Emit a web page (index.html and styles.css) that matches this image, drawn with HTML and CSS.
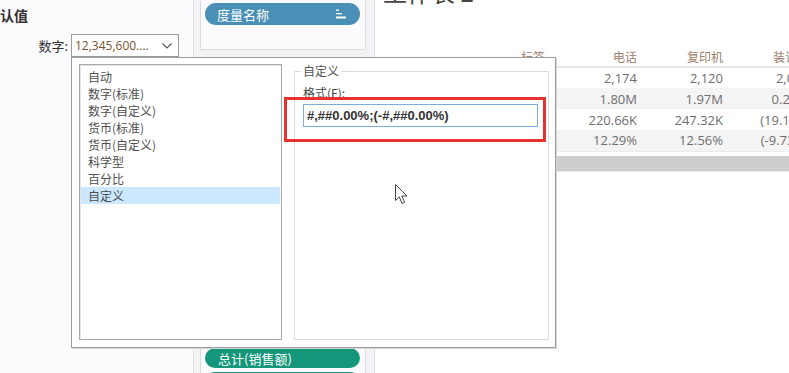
FILE: index.html
```html
<!DOCTYPE html>
<html lang="zh-CN">
<head>
  <meta charset="UTF-8" />
  <title>设置数字格式</title>
  <link rel="stylesheet" href="styles.css">
</head>
<body>
  <div class="app">
    <aside class="side">
      <div class="side-title">认值</div>
      <div class="fmt-row">
        <span class="fmt-label">数字:</span>
        <div class="select">
          <span class="select-value">12,345,600....</span>
          <svg class="chevron" width="10" height="6" viewBox="0 0 10 6"><polyline points="0.5,0.5 5,5 9.5,0.5" fill="none" stroke="#555" stroke-width="1.1"/></svg>
        </div>
      </div>
    </aside>

    <div class="shelf">
      <div class="card">
        <div class="pill pill-blue">
          <span>度量名称</span>
          <svg width="11" height="10" viewBox="0 0 11 10">
            <rect x="0" y="0.5" width="3" height="1.3" fill="#fff"/>
            <rect x="0" y="4" width="6" height="1.3" fill="#fff"/>
            <rect x="0" y="7.5" width="10" height="2" fill="#fff"/>
          </svg>
        </div>
      </div>
      <div class="card card-measures">
        <div class="pill pill-green">总计(销售额)</div>
        <div class="pill pill-green"></div>
      </div>
    </div>

    <main class="sheet">
      <h1 class="sheet-title">工作表 2</h1>
      <table class="grid">
        <thead>
          <tr><th class="lbl">标签</th><th>电话</th><th>复印机</th><th>装订机</th></tr>
        </thead>
        <tbody>
          <tr><td class="lbl">计数</td><td>2,174</td><td>2,120</td><td>2,045</td></tr>
          <tr class="alt"><td class="lbl">销售额</td><td>1.80M</td><td>1.97M</td><td>0.20M</td></tr>
          <tr><td class="lbl">利润</td><td>220.66K</td><td>247.32K</td><td>(19.12K)</td></tr>
          <tr class="alt"><td class="lbl">利润率</td><td>12.29%</td><td>12.56%</td><td>(-9.73%)</td></tr>
        </tbody>
      </table>
      <div class="scroll-bar"></div>
    </main>
  </div>

  <div class="dialog">
    <ul class="listbox">
      <li>自动</li>
      <li>数字(标准)</li>
      <li>数字(自定义)</li>
      <li>货币(标准)</li>
      <li>货币(自定义)</li>
      <li>科学型</li>
      <li>百分比</li>
      <li class="selected">自定义</li>
    </ul>
    <fieldset class="group">
      <legend>自定义</legend>
      <label class="field-label" for="fmt">格式(F):</label>
      <input class="field" id="fmt" type="text" value="#,##0.00%;(-#,##0.00%)">
    </fieldset>
    <div class="highlight"></div>
  </div>

  <svg class="cursor" width="14" height="22" viewBox="0 0 14 22">
    <path d="M0.5 0.5 L0.5 16.5 L4.3 12.9 L7 19.5 L9.6 18.4 L6.9 12 L12 12 Z" fill="#fff" stroke="#444" stroke-width="1" stroke-linejoin="round"/>
  </svg>
</body>
</html>
```

FILE: styles.css
```css
* {
  box-sizing: border-box;
}

body {
  margin: 0;
  width: 789px;
  height: 373px;
  overflow: hidden;
  position: relative;
  background: #fff;
  font-family: "Noto Sans CJK SC", sans-serif;
  color: #333;
}

.app {
  display: flex;
  height: 100%;
}

/* left format panel */
.side {
  width: 194px;
  flex-shrink: 0;
  background: #fbfafd;
  border-right: 1px solid #e0e0e4;
  padding-top: 6px;
}

.side-title {
  font-size: 14px;
  font-weight: bold;
  line-height: 18px;
  color: #333;
}

.fmt-row {
  display: flex;
  align-items: center;
  justify-content: flex-end;
  margin-top: 10px;
  padding-right: 14px;
}

.fmt-label {
  font-size: 13px;
  color: #333;
  margin-right: 3px;
}

.select {
  width: 108px;
  height: 23px;
  border: 1px solid #9a9a9a;
  background: #fff;
  display: flex;
  align-items: center;
  justify-content: space-between;
  padding: 0 6px 0 3px;
}

.select-value {
  font-family: "Open Sans", sans-serif;
  font-size: 12px;
  color: #7a5532;
}

/* shelf column */
.shelf {
  width: 181px;
  flex-shrink: 0;
  background: #f3f3f5;
  border-right: 1px solid #dcdcde;
  padding-left: 6px;
}

.card {
  width: 166px;
  height: 56px;
  margin-top: -6px;
  background: #fbfbfd;
  border: 1px solid #dcdcdf;
  padding: 8px 4px;
}

.card-measures {
  height: 60px;
  margin-top: 284px;
  padding-top: 13px;
}

.pill {
  width: 155px;
  display: flex;
  align-items: center;
  justify-content: space-between;
  color: #fff;
  font-size: 13px;
}

.pill-blue {
  height: 22px;
  border-radius: 11px;
  background: #4a8fb6;
  padding: 0 13px 0 12px;
}

.pill-green {
  height: 20px;
  border-radius: 10px;
  background: #14967a;
  padding-left: 13px;
  margin-bottom: 4px;
}

/* worksheet */
.sheet {
  flex: 1;
  min-width: 0;
  overflow: hidden;
  padding-left: 8px;
}

.sheet-title {
  margin: -22px 0 0;
  font-size: 24px;
  font-weight: normal;
  line-height: 28px;
  color: #444;
}

.grid {
  width: 426px;
  table-layout: fixed;
  margin-top: 41px;
  border-collapse: collapse;
  font-family: "Open Sans", sans-serif;
  font-size: 13px;
  color: #6e6e6e;
  white-space: nowrap;
}

.grid th {
  width: 86px;
  height: 20px;
  padding: 0;
  text-align: right;
  font-family: "Noto Sans CJK SC", sans-serif;
  font-size: 12px;
  font-weight: normal;
  color: #9a806a;
  border-bottom: 2px solid #e6e6e6;
}

.grid th.lbl,
.grid td.lbl {
  width: 168px;
  padding-right: 6px;
}

.grid td.lbl {
  text-align: left;
}

.grid td {
  height: 21px;
  padding: 0;
  text-align: right;
}

.grid tr.alt td {
  background: #f4f4f4;
}

.grid tbody tr:last-child td {
  border-bottom: 1px solid #ebebeb;
}

.scroll-bar {
  width: 500px;
  height: 16px;
  margin-top: 4px;
  background: #cdcdcd;
  border-bottom: 1px solid #e8e8e8;
}

/* format dropdown */
.dialog {
  position: absolute;
  left: 71px;
  top: 57px;
  width: 485px;
  height: 291px;
  background: #fff;
  border: 1px solid #9c9c9c;
  box-shadow: 1px 1px 0 #d6d6d6;
  display: flex;
  gap: 12px;
  padding: 6px 6px 7px 7px;
}

.listbox {
  width: 203px;
  margin: 0;
  padding: 3px 1px 0;
  list-style: none;
  border: 1px solid #a7a9b0;
  box-shadow: inset 1px 1px 0 #e4e4e6;
}

.listbox li {
  height: 17px;
  line-height: 17px;
  padding-left: 7px;
  font-size: 12px;
  color: #505050;
}

.listbox li.selected {
  background: #cce8ff;
}

.group {
  width: 255px;
  margin: 0;
  padding: 0 8px 8px;
  border: 1px solid #dcdcdc;
  min-width: 0;
}

.group legend {
  padding: 0 2px;
  margin-left: -2px;
  font-size: 12px;
  line-height: 14px;
  color: #555;
}

.field-label {
  display: block;
  margin-top: 8px;
  font-size: 12px;
  line-height: 14px;
  color: #444;
}

.field {
  display: block;
  width: 235px;
  height: 23px;
  margin: 4px 0 0;
  padding: 0 3px;
  border: 1px solid #7aaedf;
  font-family: "Liberation Sans", sans-serif;
  font-size: 13px;
  font-weight: bold;
  color: #333;
  outline: none;
}

.highlight {
  position: absolute;
  left: 212px;
  top: 39px;
  width: 262px;
  height: 45px;
  border: 3px solid #e8322f;
}

.cursor {
  position: absolute;
  left: 395px;
  top: 184px;
}
```
